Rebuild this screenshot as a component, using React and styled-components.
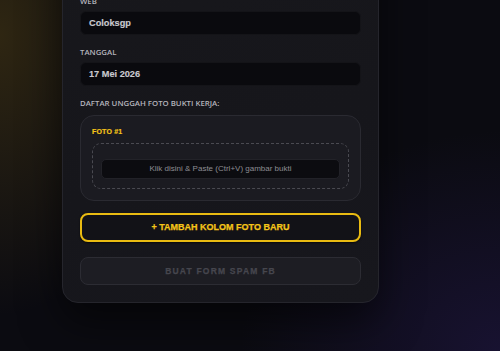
import React from 'react';
import styled, { createGlobalStyle } from 'styled-components';

const GlobalStyle = createGlobalStyle`
  html, body {
    margin: 0;
    padding: 0;
    height: 100%;
    background: #0b0b11;
  }
  * {
    box-sizing: border-box;
  }
`;

const Page = styled.div`
  height: 100vh;
  overflow: hidden;
  display: flex;
  align-items: flex-end;
  padding: 0 0 48px 62px;
  background:
    radial-gradient(ellipse 170px 280px at 0% 10%, rgba(115, 90, 20, 0.34), transparent 100%),
    radial-gradient(ellipse 260px 220px at 100% 100%, rgba(45, 30, 100, 0.38), transparent 100%),
    #0b0b11;
  font-family: "Liberation Sans", Arial, sans-serif;
`;

const Card = styled.div`
  flex-shrink: 0;
  width: 317px;
  padding: 18px 17px 17px;
  border: 1px solid #25252c;
  border-radius: 16px;
  background: linear-gradient(160deg, #18181c 0%, #16161b 60%, #17171d 100%);
  box-shadow: 0 18px 40px rgba(0, 0, 0, 0.55);
  display: flex;
  flex-direction: column;
`;

const Title = styled.h1`
  margin: 0 0 14px;
  font-size: 13px;
  font-weight: 700;
  color: #f5c518;
  text-align: center;
`;

const Field = styled.div`
  display: flex;
  flex-direction: column;
  margin-bottom: 12px;
`;

const Label = styled.label`
  font-family: "Open Sans", "Noto Sans", sans-serif;
  font-size: 7.8px;
  line-height: 10px;
  font-weight: 600;
  color: #b4b4bb;
  text-transform: uppercase;
  margin-bottom: ${p => p.$gap || 5}px;
`;

const Input = styled.div`
  height: 24px;
  display: flex;
  align-items: center;
  padding: 0 8px;
  border-radius: 6px;
  background: #0a0a0e;
  border: 1px solid #141418;
  font-size: 9.2px;
  font-weight: 700;
  color: #c9c9cf;
  -webkit-text-stroke: 0.15px #c9c9cf;
`;

const PhotoBox = styled.div`
  padding: 11px;
  border: 1px solid #2a2a31;
  border-radius: 14px;
  background: #1b1b21;
`;

const PhotoTitle = styled.div`
  font-size: 7px;
  line-height: 10px;
  font-weight: 900;
  letter-spacing: 0.2px;
  color: #f5c518;
  -webkit-text-stroke: 0.2px #f5c518;
  margin-bottom: 6px;
`;

const DropZone = styled.div`
  padding: 15px 8px 9px;
  border: 1.5px dashed #4a4a51;
  border-radius: 9px;
`;

const PasteArea = styled.div`
  height: 20px;
  display: flex;
  align-items: center;
  justify-content: center;
  border: 1px solid #222228;
  border-radius: 5px;
  background: #0c0c10;
  font-size: 8px;
  color: #8c8c92;
`;

const Button = styled.button`
  display: block;
  width: 100%;
  font-family: "Liberation Sans", Arial, sans-serif;
  font-weight: 700;
  text-transform: uppercase;
  cursor: pointer;
  border-radius: 8px;
`;

const AddButton = styled(Button)`
  margin-top: 12px;
  height: 29px;
  border: 2px solid #e9bb12;
  background: #121217;
  color: #f5c518;
  font-size: 9px;
  -webkit-text-stroke: 0.25px #f5c518;
  box-shadow: 0 1px 2px rgba(0, 0, 0, 0.6);
`;

const SubmitButton = styled(Button)`
  margin-top: 15px;
  height: 28.5px;
  border: 1px solid #2c2c33;
  background: #1d1d23;
  color: #46464e;
  font-size: 8.5px;
  letter-spacing: 1.2px;
  -webkit-text-stroke: 0.25px #46464e;
  cursor: not-allowed;
`;

export default function App() {
  return (
    <>
      <GlobalStyle />
      <Page>
        <Card>
          <Title>FORM BUKTI KERJA</Title>
          <Field>
            <Label>Nama</Label>
            <Input>Admin</Input>
          </Field>
          <Field>
            <Label>Web</Label>
            <Input>Coloksgp</Input>
          </Field>
          <Field>
            <Label>Tanggal</Label>
            <Input>17 Mei 2026</Input>
          </Field>
          <Label $gap={7}>Daftar unggah foto bukti kerja:</Label>
          <PhotoBox>
            <PhotoTitle>FOTO #1</PhotoTitle>
            <DropZone>
              <PasteArea>Klik disini &amp; Paste (Ctrl+V) gambar bukti</PasteArea>
            </DropZone>
          </PhotoBox>
          <AddButton>+ Tambah kolom foto baru</AddButton>
          <SubmitButton disabled>Buat form spam FB</SubmitButton>
        </Card>
      </Page>
    </>
  );
}
